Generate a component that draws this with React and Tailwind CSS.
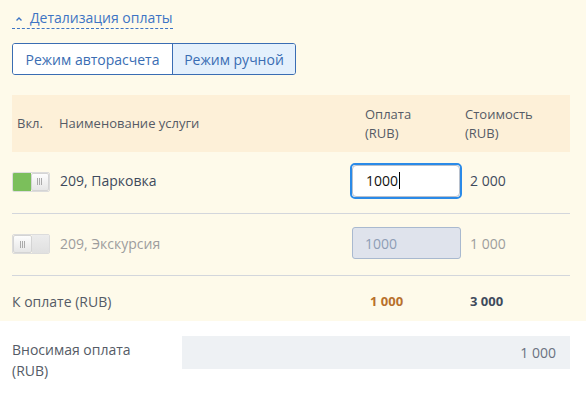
const Toggle = ({ on }) => {
  const Knob = () => (
    <div className="flex h-full w-[19px] items-center justify-center gap-[1px] rounded-[2px] border border-[#d4d4d4] bg-gradient-to-b from-[#fdfdfd] to-[#e6e6e6]">
      <span className="h-[7px] w-px bg-[#aaa]" />
      <span className="h-[7px] w-px bg-[#aaa]" />
      <span className="h-[7px] w-px bg-[#aaa]" />
    </div>
  );
  return (
    <div className="flex h-[20px] w-[38px] overflow-hidden rounded-[2px] border border-[#dcdcdc]">
      {on ? (
        <>
          <div className="h-full w-[19px] bg-[#7bbf5b]" />
          <Knob />
        </>
      ) : (
        <>
          <Knob />
          <div className="h-full flex-1 bg-gradient-to-b from-[#ececec] to-[#e0e0e0]" />
        </>
      )}
    </div>
  );
};

const App = () => {
  return (
    <div className="w-[586px] h-[394px] bg-white font-['Open_Sans',sans-serif]">
      <div className="bg-[#fefaea] pl-3 pr-4 pt-[9px] pb-0">
        <button className="flex items-center gap-[7px] border-b border-dashed border-[#3d74c4] pb-[1px] pl-[3px] text-[14px] leading-[18px] text-[#3d74c4]">
          <svg width="8" height="6" viewBox="0 0 8 6" className="mt-[1px]">
            <path d="M1.5 4.5 L4 2 L6.5 4.5" fill="none" stroke="#3d74c4" strokeWidth="1.4" />
          </svg>
          Детализация оплаты
        </button>

        <div className="mt-[14px] flex w-[284px] overflow-hidden rounded-[3px] border border-[#3a6db3] text-[14px] text-[#3a6db3]">
          <div className="flex h-[30px] w-[159px] items-center justify-center bg-white">
            Режим авторасчета
          </div>
          <div className="flex h-[30px] flex-1 items-center justify-center border-l border-[#3a6db3] bg-[#e4f0fc]">
            Режим ручной
          </div>
        </div>

        <div className="mt-[20px] grid h-[57px] grid-cols-[47px_291px_115px_1fr] items-center bg-[#fdf0d8] text-[13px] leading-[19px] text-[#555b66]">
          <div className="pl-[5px]">Вкл.</div>
          <div>Наименование услуги</div>
          <div className="pl-[15px]">
            Оплата
            <br />
            (RUB)
          </div>
          <div>
            Стоимость
            <br />
            (RUB)
          </div>
        </div>

        <div className="grid h-[62px] grid-cols-[47px_291px_115px_1fr] items-center border-b border-[#d3d6dc] pb-[4px] text-[14px]">
          <div className="pt-[2px]">
            <Toggle on />
          </div>
          <div className="pl-[1px] text-[#3e4a5c]">209, Парковка</div>
          <div>
            <div className="flex h-[36px] w-[112px] items-center rounded-[5px] border-2 border-[#2a8ae8] bg-white">
              <div className="flex h-[32px] w-full items-center rounded-[4px] border border-[#b8c0cc] pl-[13px] text-[#111]">
                1000<span className="ml-[1px] h-[17px] w-px bg-black" />
              </div>
            </div>
          </div>
          <div className="pl-[5px] text-[#3e4a5c]">2 000</div>
        </div>

        <div className="grid h-[62px] grid-cols-[47px_291px_115px_1fr] items-center border-b border-[#d3d6dc] pb-[3px] text-[14px]">
          <div className="pt-[2px]">
            <Toggle on={false} />
          </div>
          <div className="pl-[1px] text-[#9d9d9d]">209, Экскурсия</div>
          <div>
            <div className="ml-[2px] flex h-[32px] w-[109px] items-center rounded-[3px] border border-[#a9b9cf] bg-[#dfe3ec] pl-[12px] text-[#8e9db5]">
              1000
            </div>
          </div>
          <div className="pl-[5px] text-[#9d9d9d]">1 000</div>
        </div>

        <div className="grid h-[45px] grid-cols-[338px_115px_1fr] items-center pt-[6px]">
          <div className="text-[14px] text-[#555b66]">К оплате (RUB)</div>
          <div className="pl-[20px] text-[13px] font-bold text-[#b8702c]">1 000</div>
          <div className="pl-[5px] text-[13px] font-bold text-[#3e4a5c]">3 000</div>
        </div>
      </div>

      <div className="flex pl-3 pr-4 pt-[15px]">
        <div className="w-[170px] pt-[3px] text-[14px] leading-[21px] text-[#555b66]">
          Вносимая оплата
          <br />
          (RUB)
        </div>
        <div className="flex h-[33px] flex-1 items-center justify-end bg-[#eef1f4] pr-[14px] text-[14px] text-[#6b7280]">
          1 000
        </div>
      </div>
    </div>
  );
};

export default App;
